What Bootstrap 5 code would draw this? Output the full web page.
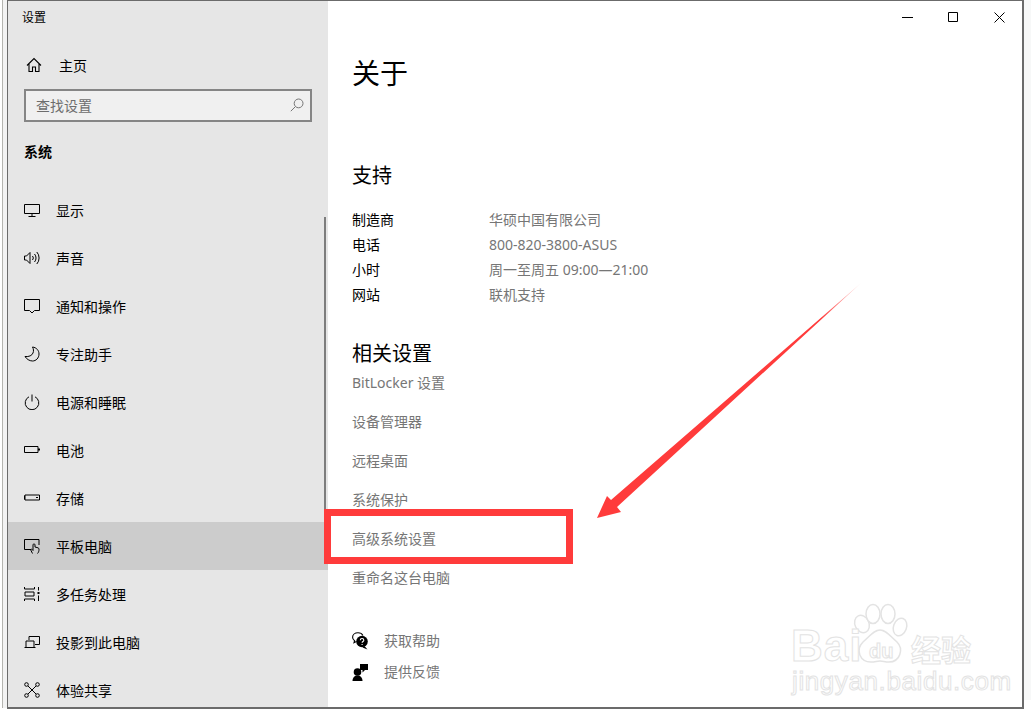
<!DOCTYPE html>
<html lang="zh">
<head>
<meta charset="utf-8">
<title>设置</title>
<link href="https://cdn.jsdelivr.net/npm/bootstrap@5.3.0/dist/css/bootstrap.min.css" rel="stylesheet">
<style>
html,body{height:716px;overflow:hidden;}
body{background:#fff;font-family:"Noto Sans","Noto Sans CJK SC",sans-serif;font-size:14px;color:#000;position:relative;}
.desk-left{width:7px;border-left:1px solid #b5b5b0;margin-left:2px;width:5px;background:#f3f3f3;height:708px;flex:none;}
.desk-right{width:7px;height:700px;flex:none;background:#f7f8f8;}
.app-window{width:1017px;height:709px;border:1px solid #6b6b6b;border-width:1.5px 2px 2px 1px;background:#fff;overflow:hidden;flex:none;}
.side-pane{width:320px;flex:none;background:#e6e6e6;position:relative;height:100%;overflow:hidden;}
.app-name{font-size:12px;line-height:16px;padding:9px 0 0 14px;height:40px;}
.nav-row{height:48px;padding-left:16px;color:#000;text-decoration:none;gap:16px;}
.nav-row svg{width:16px;height:16px;flex:none;}
.home-row{padding-left:18px;gap:17px;}
.nav-row.is-active{background:#ccc;}
.find-box{margin:0 16px;height:33px;position:relative;}
.find-box .form-control{height:33px;border:2px solid #858585;border-radius:0;background:#f0f0f0;font-size:14px;padding:0 10px;box-shadow:none;}
.find-box .form-control::placeholder{color:#6d6d6d;opacity:1;}
.find-icon{position:absolute;right:8px;top:9px;width:14px;height:14px;}
.group-label{font-weight:700;font-size:14px;line-height:20px;padding:20px 0 0 16px;height:64px;}
.pane-scroll{position:absolute;right:2px;top:216px;width:2px;height:292px;background:#7d7d7d;}
.main-pane{padding-left:24px;color:#000;}
.win-btns{height:32px;justify-content:flex-end;gap:0;}
.win-btns span{width:46px;height:32px;display:flex;align-items:center;justify-content:center;}
.page-title{font-size:28px;line-height:40px;margin:20px 0 0;font-weight:400;}
.sec-title{font-size:20px;line-height:28px;font-weight:400;margin:0;}
.sec-support{margin-top:69px;margin-bottom:17px;}
.info-row{height:25px;line-height:25px;}
.info-key{width:137px;flex:none;}
.info-val{color:#767676;}
.sec-related{margin-top:33px;}
.rel-link{display:block;height:39px;line-height:39px;color:#767676;text-decoration:none;}
.rel-list{margin-top:-5px;}
.help-list{margin-top:28px;}
.help-row{height:31px;gap:16px;color:#767676;text-decoration:none;}
.help-row svg{width:16px;height:18px;flex:none;}
.red-frame{position:absolute;left:324px;top:509px;width:249px;height:55px;border:7px solid #ff3b3b;}
.red-arrow{position:absolute;left:590px;top:275px;width:280px;height:250px;}
.wm{position:absolute;color:#fff;-webkit-text-stroke:1px #e3e3e3;white-space:nowrap;font-family:"Liberation Sans",sans-serif;}
.wm-ba{left:791px;top:622px;font-size:44px;line-height:48px;font-weight:700;letter-spacing:1px;}
.wm-du{left:869px;top:639px;font-size:20px;line-height:24px;font-weight:700;}
.wm-cn{left:911px;top:630px;font-size:30px;line-height:36px;font-family:"Noto Sans CJK SC",sans-serif;font-weight:700;}
.wm-url{left:792px;top:667px;font-size:26px;line-height:28px;letter-spacing:.6px;}
.wm-paw{position:absolute;left:846px;top:603px;width:68px;height:66px;}
.scrap{position:absolute;}
</style>
</head>
<body>
<div class="d-flex">
  <div class="desk-left"></div>
  <div class="app-window d-flex">
    <aside class="side-pane">
      <div class="app-name">设置</div>
      <a class="nav-row home-row d-flex align-items-center" href="#">
        <svg viewBox="0 0 16 16" fill="none" stroke="#000" stroke-width="1.1"><path d="M1 8.5 8 1.5l7 7M3 7v7.5h3.5V10h3v4.5H13V7"/></svg>
        <span>主页</span>
      </a>
      <div class="find-box">
        <input class="form-control" type="text" placeholder="查找设置">
        <svg class="find-icon" viewBox="0 0 14 14" fill="none" stroke="#767676" stroke-width="1"><circle cx="8.6" cy="5.4" r="4.4"/><path d="M5.4 8.6.8 13.2"/></svg>
      </div>
      <div class="group-label">系统</div>
      <a class="nav-row d-flex align-items-center" href="#">
        <svg viewBox="0 0 16 16" fill="none" stroke="#000" stroke-width="1"><path d="M.5 2.5h15v9H.5zM8 11.5v3M4.500 14.500h7"/></svg><span>显示</span>
      </a>
      <a class="nav-row d-flex align-items-center" href="#">
        <svg viewBox="0 0 16 16" fill="none" stroke="#000" stroke-width="1"><path d="M.5 6h2L6 2.500v11L2.500 10h-2zM8.500 6a3 3 0 0 1 0 4M10.500 4a6 6 0 0 1 0 8M12.800 2a9 9 0 0 1 0 12"/></svg><span>声音</span>
      </a>
      <a class="nav-row d-flex align-items-center" href="#">
        <svg viewBox="0 0 16 16" fill="none" stroke="#000" stroke-width="1"><path d="M.5 1.500h15v11h-5L8 15l-2.500-2.500h-5z"/></svg><span>通知和操作</span>
      </a>
      <a class="nav-row d-flex align-items-center" href="#">
        <svg viewBox="0 0 16 16" fill="none" stroke="#000" stroke-width="1"><path d="M8.500 1c4 .5 6.500 3.500 6.500 7 0 4-3 7-6.500 7-3 0-6-2-7.500-4.500 4 .5 7-1 8-3.500.8-2 .6-4-.5-6z"/></svg><span>专注助手</span>
      </a>
      <a class="nav-row d-flex align-items-center" href="#">
        <svg viewBox="0 0 16 16" fill="none" stroke="#000" stroke-width="1"><path d="M8 .5v7M5 2.800a6.800 6.800 0 1 0 6 0"/></svg><span>电源和睡眠</span>
      </a>
      <a class="nav-row d-flex align-items-center" href="#">
        <svg viewBox="0 0 16 16" fill="none" stroke="#000" stroke-width="1"><path d="M.5 4.500h13.500v6H.5z"/><path d="M15 6.500v2" stroke-width="2"/></svg><span>电池</span>
      </a>
      <a class="nav-row d-flex align-items-center" href="#">
        <svg viewBox="0 0 16 16" fill="none" stroke="#000" stroke-width="1"><path d="M1 5h14.500v5H1z" /><path d="M.5 5.500v4M12 7.500h2"/></svg><span>存储</span>
      </a>
      <a class="nav-row is-active d-flex align-items-center" href="#">
        <svg viewBox="0 0 16 16" fill="none" stroke="#000" stroke-width="1"><path d="M7 11.500H.5v-10h14.500V7M8.500 15.500 6.500 11.500l1-.5 1.500 1.500V6.800c0-1.200 2-1.200 2 0V9l3 .8c.7.200 1 .7 1 1.400 0 2-.5 3.300-1.500 4.300"/></svg><span>平板电脑</span>
      </a>
      <a class="nav-row d-flex align-items-center" href="#">
        <svg viewBox="0 0 16 16" fill="none" stroke="#000" stroke-width="1"><path d="M.5 1v2h10V1M.5 15v-2h10v2M1 6h9v4H1zM14.500 1v3.500M14.500 9.500V15"/><path d="M14.500 6v2" stroke-width="2"/></svg><span>多任务处理</span>
      </a>
      <a class="nav-row d-flex align-items-center" href="#">
        <svg viewBox="0 0 16 16" fill="none" stroke="#000" stroke-width="1"><path d="M5 6V2.500h10.500v8H11M.5 13.500h11M2 13V7h8v6"/></svg><span>投影到此电脑</span>
      </a>
      <a class="nav-row d-flex align-items-center" href="#">
        <svg viewBox="0 0 16 16" fill="none" stroke="#000" stroke-width="1"><circle cx="2.500" cy="2.500" r="1.800"/><circle cx="13.500" cy="2.500" r="1.800"/><circle cx="2.500" cy="13.500" r="1.800"/><circle cx="13.500" cy="13.500" r="1.800"/><path d="M4 4l8 8M12 4l-8 8"/></svg><span>体验共享</span>
      </a>
      <div class="pane-scroll"></div>
    </aside>
    <main class="main-pane flex-grow-1 d-flex flex-column">
      <div class="win-btns d-flex">
        <span><svg width="11" height="11" viewBox="0 0 11 11" stroke="#000" fill="none"><path d="M0 5.500h11"/></svg></span>
        <span><svg width="11" height="11" viewBox="0 0 11 11" stroke="#000" fill="none"><path d="M.5.500h9v9h-9z"/></svg></span>
        <span><svg width="11" height="11" viewBox="0 0 11 11" stroke="#000" fill="none"><path d="M.5.500l10 10M10.500.500l-10 10"/></svg></span>
      </div>
      <h1 class="page-title">关于</h1>
      <h2 class="sec-title sec-support">支持</h2>
      <div class="info-row d-flex"><span class="info-key">制造商</span><span class="info-val">华硕中国有限公司</span></div>
      <div class="info-row d-flex"><span class="info-key">电话</span><span class="info-val">800-820-3800-ASUS</span></div>
      <div class="info-row d-flex"><span class="info-key">小时</span><span class="info-val">周一至周五 09:00—21:00</span></div>
      <div class="info-row d-flex"><span class="info-key">网站</span><span class="info-val">联机支持</span></div>
      <h2 class="sec-title sec-related">相关设置</h2>
      <div class="rel-list">
        <a class="rel-link" href="#">BitLocker 设置</a>
        <a class="rel-link" href="#">设备管理器</a>
        <a class="rel-link" href="#">远程桌面</a>
        <a class="rel-link" href="#">系统保护</a>
        <a class="rel-link" href="#">高级系统设置</a>
        <a class="rel-link" href="#">重命名这台电脑</a>
      </div>
      <div class="help-list">
        <a class="help-row d-flex align-items-center" href="#">
          <svg viewBox="0 0 16 18"><path d="M6 .8C2.800.8.600 2.800.600 5.200c0 1.500.8 2.700 2 3.500l-.6 2 2.400-1.200" fill="none" stroke="#000" stroke-width="1.100"/><path d="M6 .8c2.400 0 4.200 1.100 5 2.700" fill="none" stroke="#000" stroke-width="1.100"/><circle cx="10" cy="9.500" r="5.800"/><path d="M12.500 14l3 3.500-5-2z"/><path d="M8.300 8.200c0-2.200 3.500-2.200 3.500 0 0 1.300-1.700 1.300-1.700 2.600M10.100 12v1" fill="none" stroke="#fff" stroke-width="1.100"/></svg>
          <span>获取帮助</span>
        </a>
        <a class="help-row d-flex align-items-center" href="#">
          <svg viewBox="0 0 16 18"><circle cx="5.500" cy="9" r="3.800"/><path d="M.5 18c0-3.500 2.200-5.500 5-5.500s5 2 5 5.500z"/><path d="M8 1h8v6h-3l-2.500 2.500V7H8z"/></svg>
          <span>提供反馈</span>
        </a>
      </div>
    </main>
  </div>
  <div class="desk-right"></div>
</div>

<div class="red-frame"></div>
<svg class="red-arrow" viewBox="590 275 280 250">
  <defs><linearGradient id="fade" gradientUnits="userSpaceOnUse" x1="861" y1="283" x2="820" y2="318"><stop offset="0" stop-color="#ff3b3b" stop-opacity=".15"/><stop offset="1" stop-color="#ff3b3b"/></linearGradient></defs>
  <polygon fill="url(#fade)" points="861,283 617,507 621,512 597,518 607,496 611,500"/>
</svg>

<svg class="wm-paw" viewBox="0 0 68 66" fill="#fff" stroke="#e3e3e3" stroke-width="1.500">
  <ellipse cx="16" cy="21" rx="7" ry="9" transform="rotate(-25 16 21)"/>
  <ellipse cx="27" cy="11" rx="7" ry="9.500"/>
  <ellipse cx="42" cy="11" rx="7" ry="9.500"/>
  <ellipse cx="54" cy="24" rx="6.500" ry="9" transform="rotate(20 54 24)"/>
  <path d="M34 27c6 0 10 6 17 12 7 7 3 20-8 20-4 0-6-1-9-1s-5 1-9 1c-11 0-16-12-8-20 7-6 11-12 17-12z"/>
</svg>
<span class="wm wm-ba">Bai</span>
<span class="wm wm-du">du</span>
<span class="wm wm-cn">经验</span>
<span class="wm wm-url">jingyan.baidu.com</span>
</body>
</html>
